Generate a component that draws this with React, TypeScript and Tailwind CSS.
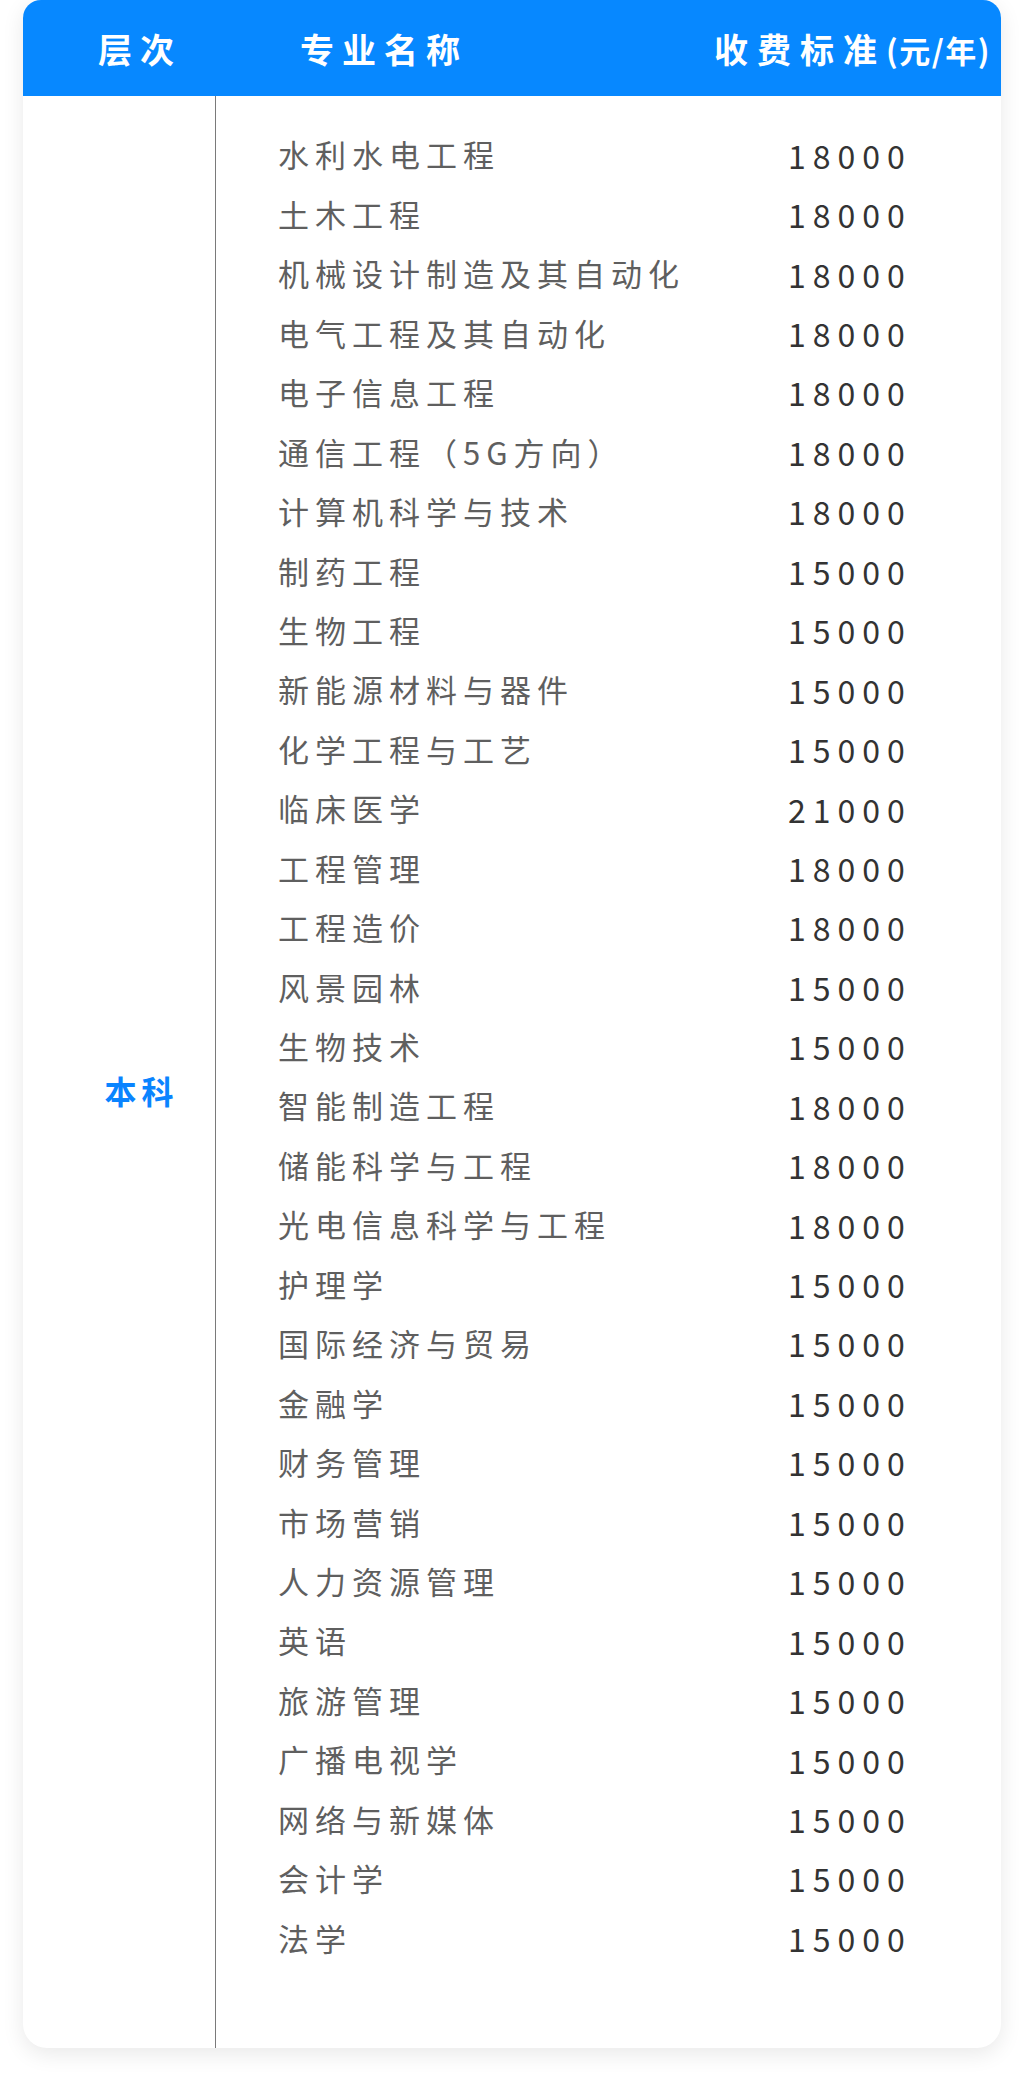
import React from 'react'

const rows: [string, string][] = [
  ['水利水电工程', '18000'],
  ['土木工程', '18000'],
  ['机械设计制造及其自动化', '18000'],
  ['电气工程及其自动化', '18000'],
  ['电子信息工程', '18000'],
  ['通信工程（5G方向）', '18000'],
  ['计算机科学与技术', '18000'],
  ['制药工程', '15000'],
  ['生物工程', '15000'],
  ['新能源材料与器件', '15000'],
  ['化学工程与工艺', '15000'],
  ['临床医学', '21000'],
  ['工程管理', '18000'],
  ['工程造价', '18000'],
  ['风景园林', '15000'],
  ['生物技术', '15000'],
  ['智能制造工程', '18000'],
  ['储能科学与工程', '18000'],
  ['光电信息科学与工程', '18000'],
  ['护理学', '15000'],
  ['国际经济与贸易', '15000'],
  ['金融学', '15000'],
  ['财务管理', '15000'],
  ['市场营销', '15000'],
  ['人力资源管理', '15000'],
  ['英语', '15000'],
  ['旅游管理', '15000'],
  ['广播电视学', '15000'],
  ['网络与新媒体', '15000'],
  ['会计学', '15000'],
  ['法学', '15000']
]

export default function App () {
  return (
    <div className="min-h-[2093px] bg-white pl-[23px] font-['Noto_Sans_CJK_SC','Noto_Sans',sans-serif]">
      <div className="w-[978px] rounded-t-[18px] rounded-b-[24px] bg-white shadow-[0_6px_22px_rgba(0,0,0,0.09)]">
        {/* header */}
        <div className="flex h-[96px] items-center rounded-t-[18px] bg-[#0788ff] font-bold text-white">
          <div className="w-[192px] pl-[42px] text-center text-[34px] tracking-[8px]">层次</div>
          <div className="w-[499px] pl-[85px] text-[34px] tracking-[8px]">专业名称</div>
          <div className="flex items-baseline">
            <span className="text-[34px] tracking-[9px]">收费标准</span>
            <span className="text-[31px] tracking-[1.5px]">(元/年)</span>
          </div>
        </div>

        {/* body */}
        <div className="flex">
          <div className="flex w-[193px] items-center justify-center border-r border-[#7a7a7a] pt-[38px] pb-[2px] pl-[40px]">
            <span className="pl-[5px] text-[32px] font-bold tracking-[5px] text-[#0a84ff]">本科</span>
          </div>
          <div className="flex-1 pt-[29px] pb-[80px]">
            {rows.map(([name, fee]) => (
              <div key={name} className="flex h-[59.45px] items-center">
                <div className="w-[572px] pl-[62px] text-[31px] tracking-[6px] text-[#5f5f5f]">{name}</div>
                <div className="text-[32px] tracking-[7px] text-[#333333]">{fee}</div>
              </div>
            ))}
          </div>
        </div>
      </div>
    </div>
  )
}
